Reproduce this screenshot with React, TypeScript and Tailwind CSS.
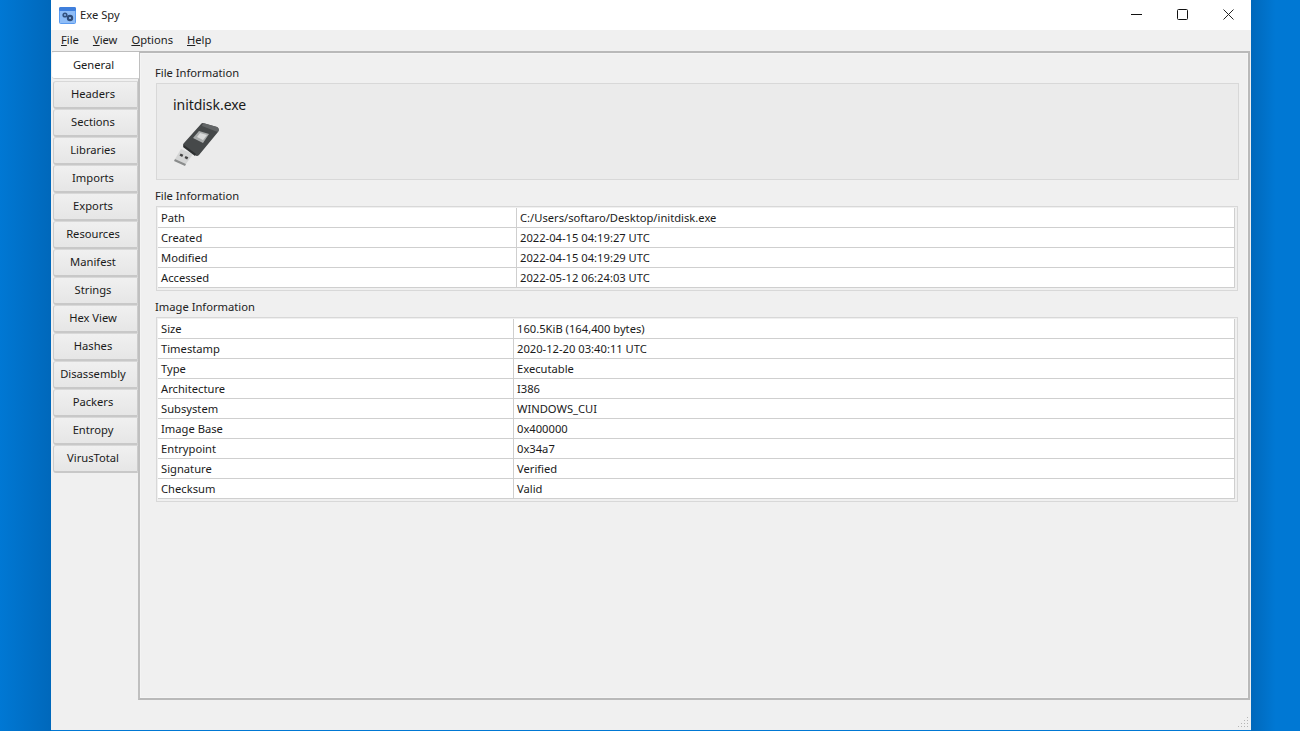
const tabs = ['General', 'Headers', 'Sections', 'Libraries', 'Imports', 'Exports', 'Resources', 'Manifest', 'Strings', 'Hex View', 'Hashes', 'Disassembly', 'Packers', 'Entropy', 'VirusTotal'];

const fileRows = [
  ['Path', 'C:/Users/softaro/Desktop/initdisk.exe'],
  ['Created', '2022-04-15 04:19:27 UTC'],
  ['Modified', '2022-04-15 04:19:29 UTC'],
  ['Accessed', '2022-05-12 06:24:03 UTC'],
];

const imageRows = [
  ['Size', '160.5KiB (164,400 bytes)'],
  ['Timestamp', '2020-12-20 03:40:11 UTC'],
  ['Type', 'Executable'],
  ['Architecture', 'I386'],
  ['Subsystem', 'WINDOWS_CUI'],
  ['Image Base', '0x400000'],
  ['Entrypoint', '0x34a7'],
  ['Signature', 'Verified'],
  ['Checksum', 'Valid'],
];

const AppIcon = () => (
  <svg width="17" height="17" viewBox="0 0 17 17" className="shrink-0">
    <rect x="0" y="0" width="17" height="17" rx="2" fill="#5b9bf0" />
    <rect x="0" y="0" width="17" height="4" rx="1.5" fill="#3f7fdc" />
    <rect x="1" y="4" width="15" height="12" fill="#8fbdf7" />
    <circle cx="6" cy="8" r="2.6" fill="#33527f" />
    <circle cx="6" cy="8" r="0.9" fill="#8fbdf7" />
    <circle cx="11" cy="11" r="3.2" fill="#2f4c78" />
    <circle cx="11" cy="11" r="1.1" fill="#8fbdf7" />
  </svg>
);

const UsbIcon = () => (
  <svg width="48" height="48" viewBox="0 0 48 48">
    <path d="M7 28 L1 38 L12 43 L19 33 Z" fill="#d4d5d5" />
    <path d="M1 38 L12 43 L11 45 L0 40 Z" fill="#8a8c8c" />
    <rect x="6" y="33" width="3" height="2.4" transform="rotate(28 7.5 34)" fill="#444" />
    <rect x="11" y="35.5" width="3" height="2.4" transform="rotate(28 12.5 36.5)" fill="#444" />
    <path d="M29 2 L43 6 Q46 8 44 11 L25 34 Q23 36 21 34 L10 26 Q8 24 10 22 L27 3 Q28 1.5 29 2 Z" fill="#46494a" />
    <path d="M29 2 L43 6 Q46 8 44 11 L41 10 L28 5 Z" fill="#626566" />
    <path d="M10 24 L22 33 L21 35 L9 26 Z" fill="#2d2f30" />
    <path d="M25 10 L35 13 L29 22 L19 17 Z" fill="#a9acac" />
    <path d="M26 12 L33 14 L29 19 L23 16 Z" fill="#d9dada" />
  </svg>
);

const InfoTable = ({ rows, labelWidth }: { rows: string[][]; labelWidth: string }) => (
  <div className="border border-[#d8d8d8] pt-px pl-px pr-[2px] pb-[2px] mr-px">
    {rows.map(([label, value]) => (
      <div key={label} className="flex h-5 bg-white border-b border-r border-[#cfcfcf]">
        <div className={`${labelWidth} shrink-0 border-r border-[#cfcfcf] pl-[3px] leading-[19px]`}>{label}</div>
        <div className="pl-[3px] leading-[19px]">{value}</div>
      </div>
    ))}
  </div>
);

export default function App() {
  return (
    <div className="h-[731px] flex overflow-hidden text-[11.2px] text-[#1a1a1a] bg-[#0078d4] font-['Noto_Sans',sans-serif]">
      <div className="w-[51px] h-full bg-gradient-to-r from-[#0078d4] to-[#0068bb]" />
      <div className="w-[1200px] h-[730px] bg-[#f0f0f0] flex flex-col relative">
        <div className="h-[30px] bg-white flex items-center pl-2 shrink-0">
          <AppIcon />
          <span className="ml-[4px] text-[#222]">Exe Spy</span>
          <div className="ml-auto flex items-center -mt-[2px]">
            <svg width="11" height="3" className="mr-[35px]"><rect y="1" width="11" height="1" fill="#111" /></svg>
            <svg width="11" height="11" className="mr-[35px]"><rect x="0.5" y="0.5" width="10" height="10" rx="1" fill="none" stroke="#111" /></svg>
            <svg width="11" height="11" className="mr-[17px]"><path d="M0.5 0.5 L10.5 10.5 M10.5 0.5 L0.5 10.5" stroke="#222" /></svg>
          </div>
        </div>
        <div className="h-[21px] flex items-center pl-[10px] gap-[14px] shrink-0 text-[#222]">
          <span><u>F</u>ile</span>
          <span><u>V</u>iew</span>
          <span><u>O</u>ptions</span>
          <span><u>H</u>elp</span>
        </div>
        <div className="flex h-[649px] shrink-0 pl-px pr-px">
          <div className="w-[87px] shrink-0 flex flex-col relative z-10 border-t border-[#bdbdbd]">
            {tabs.map((tab, i) =>
              i === 0 ? (
                <div key={tab} className="h-[27px] bg-white rounded-l-[3px] mb-[2px] flex items-center justify-center w-[87px] pr-[4px] border-b border-[#d0d0d0] shrink-0">{tab}</div>
              ) : (
                <div key={tab} className="h-[28px] ml-px w-[85px] bg-gradient-to-b from-[#f0f0f0] to-[#e6e6e6] border border-[#cccccc] border-t-[#d8d8d8] border-b-2 border-b-[#c8c8c8] rounded-l-[3px] flex items-center justify-center shrink-0 pr-[5px]">{tab}</div>
              )
            )}
          </div>
          <div className="flex-1 border-2 border-[#b9b9b9] border-l-[#bfbfbf] outline-1 outline-[#f4f4f4] -outline-offset-3 pt-[12px] pl-[15px] pr-[9px] -ml-px">
            <div className="h-[15px] leading-[15px] text-[#222]">File Information</div>
            <div className="h-[97px] mt-[3px] ml-px bg-[#ebebeb] border border-[#d8d8d8] pl-[16px] pt-[12px]">
              <div className="text-[14px] leading-[18px] tracking-[-0.05px]">initdisk.exe</div>
              <div className="mt-[7px] ml-px"><UsbIcon /></div>
            </div>
            <div className="h-[15px] leading-[15px] mt-[8px] text-[#222]">File Information</div>
            <div className="mt-[3px] ml-px">
              <InfoTable rows={fileRows} labelWidth="w-[359px]" />
            </div>
            <div className="h-[15px] leading-[15px] mt-[8px] text-[#222]">Image Information</div>
            <div className="mt-[3px] ml-px">
              <InfoTable rows={imageRows} labelWidth="w-[356px]" />
            </div>
          </div>
        </div>
        <svg width="12" height="12" className="absolute right-px bottom-px" fill="#b5b5b5">
          <rect x="9" y="0" width="1" height="1" />
          <rect x="6" y="3" width="1" height="1" /><rect x="9" y="3" width="1" height="1" />
          <rect x="3" y="6" width="1" height="1" /><rect x="6" y="6" width="1" height="1" /><rect x="9" y="6" width="1" height="1" />
          <rect x="0" y="9" width="1" height="1" /><rect x="3" y="9" width="1" height="1" /><rect x="6" y="9" width="1" height="1" /><rect x="9" y="9" width="1" height="1" />
        </svg>
      </div>
      <div className="flex-1 h-full bg-gradient-to-r from-[#0068bb] via-[#0078d4] to-[#0078d4]" />
    </div>
  );
}
